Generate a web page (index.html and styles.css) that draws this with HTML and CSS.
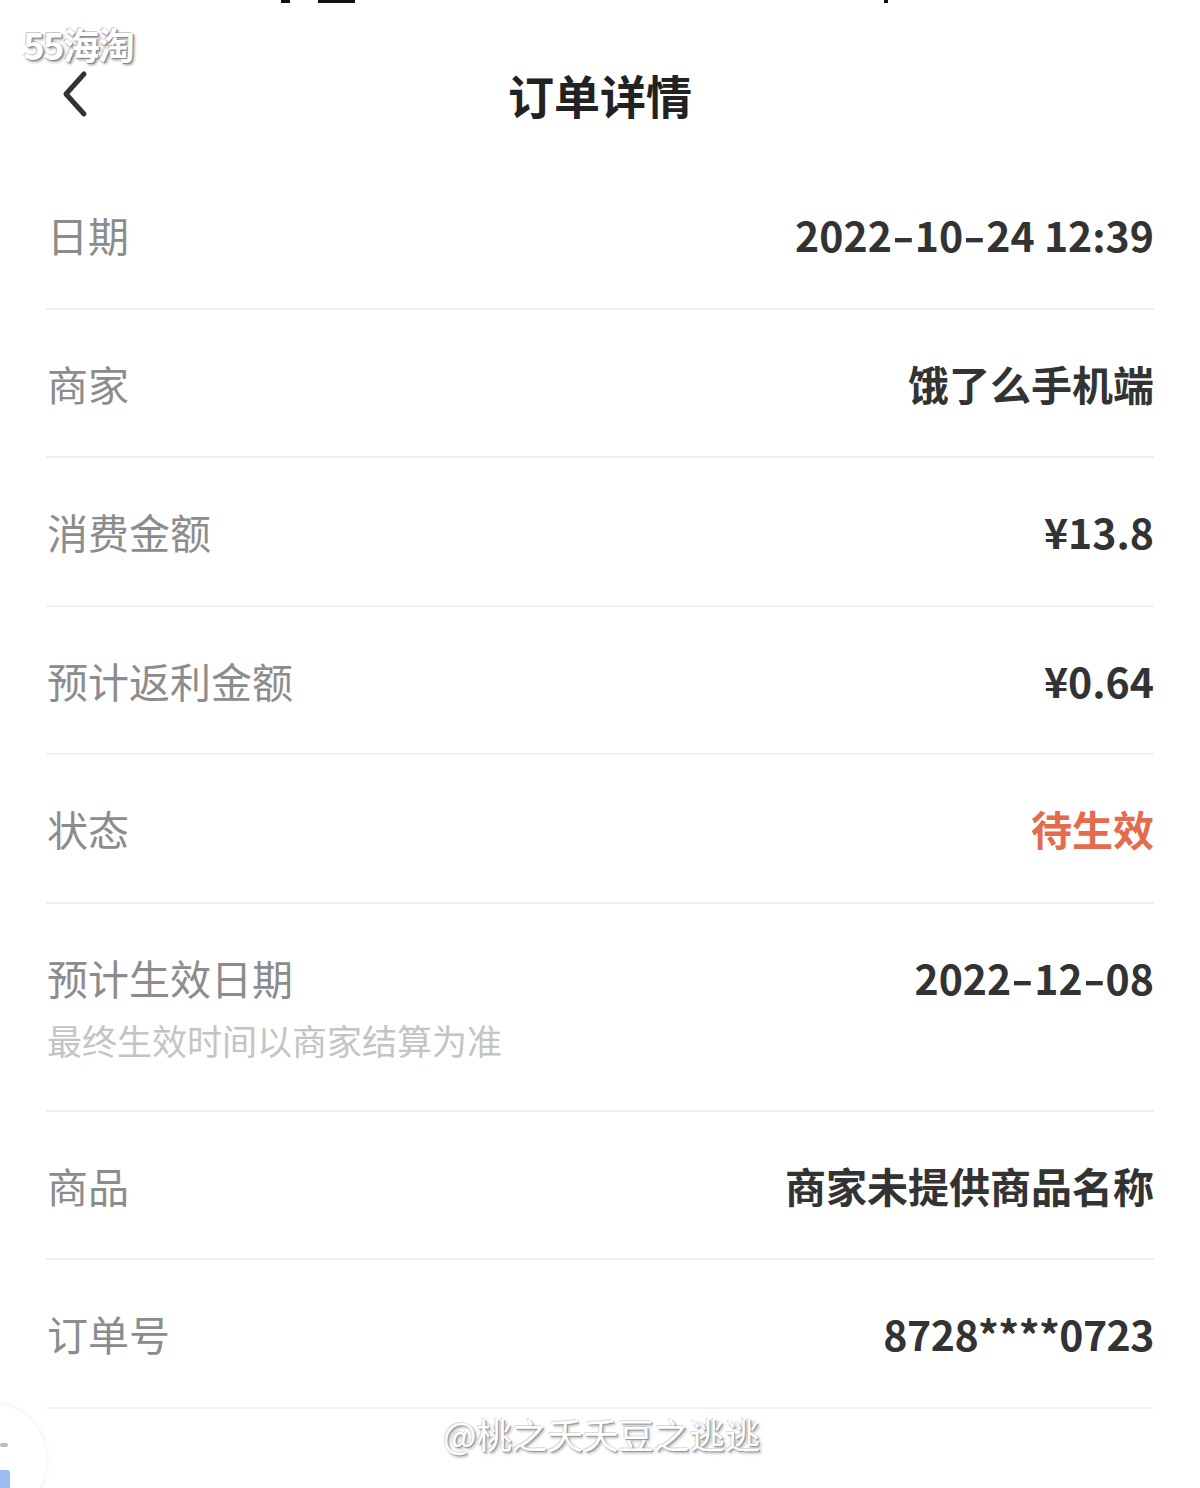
FILE: index.html
```html
<!DOCTYPE html>
<html>
<head>
    <title>订单详情</title>
    <link rel="stylesheet" href="styles.css">
</head>
<body>
    <div class="statusbar">
        <span class="sb-a"></span>
        <span class="sb-b"></span>
        <span class="sb-c"></span>
    </div>
    <div class="mark-top">55海淘</div>

    <div class="header">
        <a class="back" href="#">
            <svg width="30" height="48" viewBox="0 0 30 48">
                <path d="M24 4 L6 24 L24 44" fill="none" stroke="#333" stroke-width="5" stroke-linecap="round" stroke-linejoin="round"/>
            </svg>
        </a>
        <h1>订单详情</h1>
    </div>

    <div class="list">
        <div class="row">
            <div class="label">日期</div>
            <div class="value">2022<span class="dash">-</span>10<span class="dash">-</span>24 12:39</div>
        </div>
        <div class="row">
            <div class="label">商家</div>
            <div class="value">饿了么手机端</div>
        </div>
        <div class="row">
            <div class="label">消费金额</div>
            <div class="value">¥13.8</div>
        </div>
        <div class="row">
            <div class="label">预计返利金额</div>
            <div class="value">¥0.64</div>
        </div>
        <div class="row">
            <div class="label">状态</div>
            <div class="value pending">待生效</div>
        </div>
        <div class="row tall">
            <div class="label">
                预计生效日期
                <div class="hint">最终生效时间以商家结算为准</div>
            </div>
            <div class="value">2022<span class="dash">-</span>12<span class="dash">-</span>08</div>
        </div>
        <div class="row">
            <div class="label">商品</div>
            <div class="value">商家未提供商品名称</div>
        </div>
        <div class="row">
            <div class="label">订单号</div>
            <div class="value order-no">8728****0723</div>
        </div>
    </div>

    <div class="mark-bottom">@桃之夭夭豆之逃逃</div>
    <div class="float-btn"><span class="fb-line"></span><span class="fb-blue"></span></div>
</body>
</html>
```

FILE: styles.css
```css
body {
    margin: 0;
    background-color: #fff;
    font-family: "Noto Sans CJK SC", "Noto Sans", sans-serif;
    width: 1200px;
    height: 1488px;
    overflow: hidden;
    position: relative;
}
.statusbar {
    height: 4px;
    position: relative;
}
.statusbar span {
    position: absolute;
    top: 0;
    height: 3px;
    background: #111;
}
.sb-a { left: 281px; width: 9px; }
.sb-b { left: 318px; width: 37px; }
.sb-c { left: 884px; width: 4px; }
.mark-top {
    position: absolute;
    left: 23px;
    top: 17px;
    font-size: 37px;
    font-weight: bold;
    color: #fff;
    letter-spacing: -2px;
    text-shadow: 1px 1px 0 #888, 2px 2px 3px #999, -1px -1px 0 #ccc;
}
.header {
    height: 157px;
    display: flex;
    align-items: center;
    justify-content: center;
    position: relative;
}
.back {
    position: absolute;
    left: 60px;
    top: 66px;
}
.header h1 {
    margin: 0;
    font-size: 46px;
    font-weight: bold;
    color: #222;
    position: relative;
    top: 11px;
}
.list {
    padding: 0 46px;
}
.row {
    display: flex;
    justify-content: space-between;
    align-items: flex-start;
    border-bottom: 2px solid #f0f0f0;
    height: 148.5px;
    box-sizing: border-box;
    padding-top: 45px;
}
.row.tall {
    height: 208px;
}
.label {
    font-size: 41px;
    color: #8c8c8c;
    line-height: 56px;
    padding-left: 1px;
}
.hint {
    font-size: 35px;
    color: #c4c4c4;
    line-height: 48px;
    margin-top: 11px;
}
.value {
    font-size: 41px;
    font-weight: bold;
    color: #333;
    line-height: 56px;
}
.dash {
    display: inline-block;
    width: 23px;
    text-align: center;
    transform: scaleX(1.5);
}
.order-no {
    letter-spacing: -0.5px;
}
.pending {
    color: #e46b4c;
}
.mark-bottom {
    position: absolute;
    left: 443px;
    top: 1408px;
    font-size: 35.5px;
    color: #fff;
    text-shadow: 1px 1px 0 #999, 2px 2px 3px #aaa, -1px -1px 0 #ddd;
}
.float-btn {
    position: absolute;
    left: -50px;
    top: 1405px;
    width: 96px;
    height: 110px;
    border-radius: 50%;
    background: #fff;
    box-shadow: 0 0 6px rgba(0, 0, 0, 0.08);
}
.fb-line {
    position: absolute;
    left: 50px;
    top: 38px;
    width: 8px;
    height: 4px;
    border-radius: 2px;
    background: #bbb;
}
.fb-blue {
    position: absolute;
    left: 48px;
    top: 65px;
    width: 12px;
    height: 30px;
    border-radius: 3px;
    background: #9cbcf4;
}
```
